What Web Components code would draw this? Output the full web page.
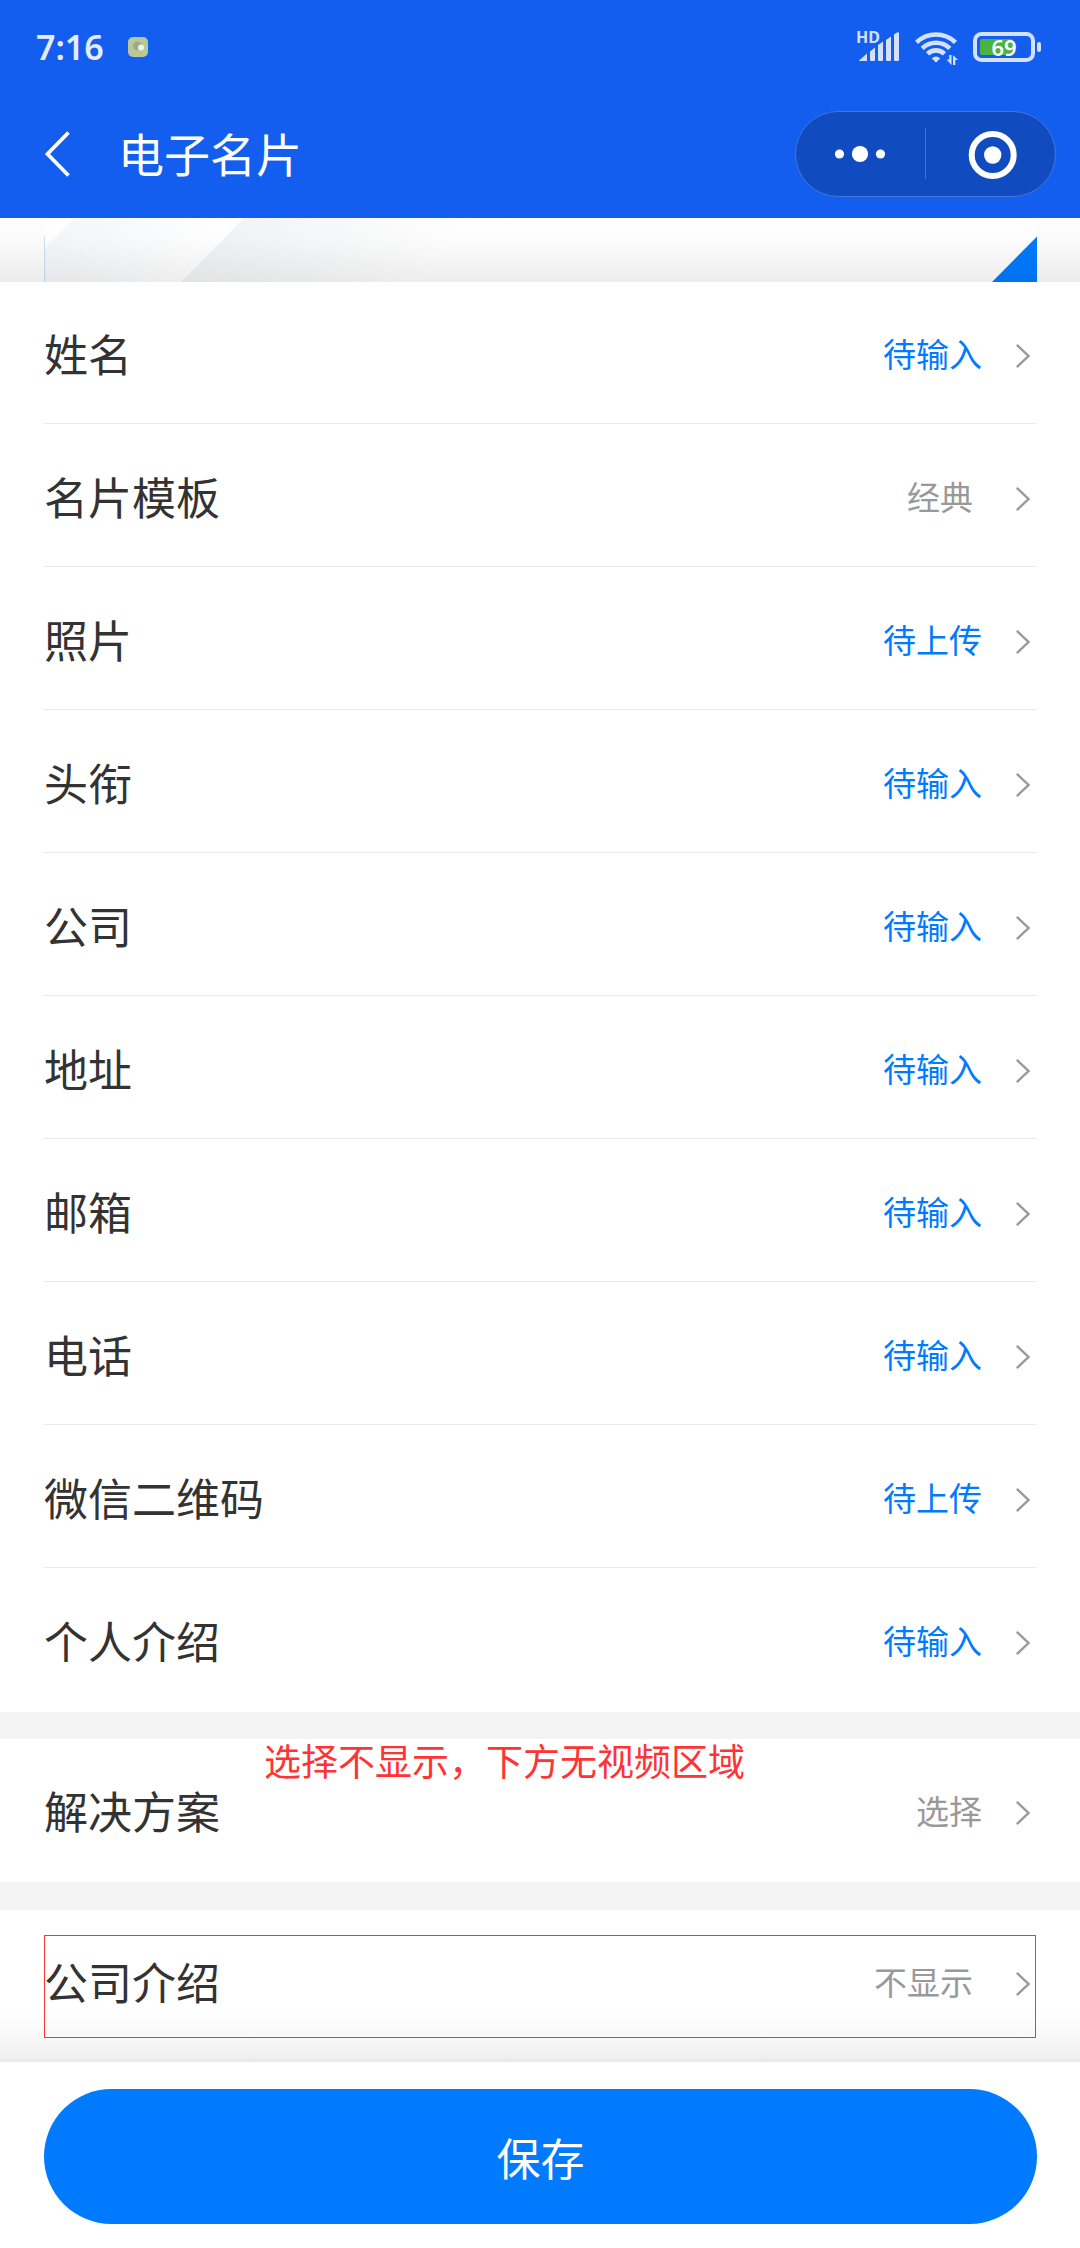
<!DOCTYPE html>
<html lang="zh-CN">
<head>
<meta charset="utf-8">
<title>电子名片</title>
<style>
  html, body {
    margin: 0;
    padding: 0;
  }

  body {
    width: 1080px;
    height: 2248px;
    overflow: hidden;
    background: #fff;
    color: #333;
    font-family: "Noto Sans CJK SC", sans-serif;
  }
</style>
</head>
<body>
<card-page></card-page>

<script>
class StatusBar extends HTMLElement {
  constructor() {
    super()
    this.attachShadow({ mode: 'open' })
  }

  connectedCallback() {
    this.shadowRoot.innerHTML = `
      <style>
        :host {
          height: 94px;
          padding: 0 39px 0 36px;
          display: flex;
          align-items: center;
          box-sizing: border-box;
          color: #e4ecff;
          font-family: "Noto Sans", sans-serif;
        }

        svg {
          display: block;
        }

        .time {
          width: 92px;
          padding-bottom: 1px;
          font-size: 34px;
          font-weight: 600;
          line-height: 40px;
        }

        .icons {
          margin-left: auto;
          padding-top: 4px;
          display: flex;
          align-items: flex-start;
        }

        .signal, .battery {
          position: relative;
        }

        .wifi {
          margin: 0 15px 0 16px;
        }

        .hd {
          position: absolute;
          left: -3px;
          top: -3px;
          font-size: 16px;
          font-weight: 700;
          line-height: 16px;
          color: #d3e0ff;
        }

        .level {
          position: absolute;
          left: 0;
          top: 0;
          width: 62px;
          text-align: center;
          font-size: 22px;
          font-weight: 600;
          line-height: 30px;
          color: #fff;
        }
      </style>

      <span class="time">7:16</span>
      <svg width="20" height="20" viewBox="0 0 20 20">
        <rect width="20" height="20" rx="5" fill="#b8c898"/>
        <circle cx="9.5" cy="9" r="4.6" fill="#9dab88"/>
        <circle cx="13" cy="10.6" r="3" fill="#f0f3e8"/>
      </svg>
      <div class="icons">
        <div class="signal">
          <svg width="40" height="34" viewBox="0 0 40 34" fill="#d3e0ff">
            <path d="M0 28.500L8 21.500V29H1Q0 29 0 28.500Z"/>
            <path d="M11 19.500L16 15.500V28Q16 29 15 29H12Q11 29 11 28Z"/>
            <path d="M19 13L24 9.500V28Q24 29 23 29H20Q19 29 19 28Z"/>
            <path d="M27 8L32 4.500V28Q32 29 31 29H28Q27 29 27 28Z"/>
            <path d="M35 2.500L38.500 .2Q40 0 40 1V28Q40 29 39 29H36Q35 29 35 28Z"/>
          </svg>
          <span class="hd">HD</span>
        </div>
        <svg class="wifi" width="43" height="34" viewBox="0 0 43 34">
          <g fill="none" stroke="#d3e0ff" stroke-width="4.600">
            <path d="M1.500 10.400A28 28 0 0 1 40.500 10.400"/>
            <path d="M7.200 16.300A20 20 0 0 1 34.800 16.300"/>
            <path d="M12.600 21.800A12 12 0 0 1 29.400 21.800"/>
          </g>
          <path d="M21 30.500L16.800 26.400Q21 22.500 25.200 26.400Z" fill="#d3e0ff"/>
          <path d="M36.500 23V33L31.500 27.500H34.200V23ZM38 33V23L43 28H40.300V33Z" fill="#d3e0ff"/>
        </svg>
        <div class="battery">
          <svg width="68" height="30" viewBox="0 0 68 30">
            <rect x="2" y="2" width="58" height="26" rx="6.500" fill="none" stroke="#d3e0ff" stroke-width="4"/>
            <rect x="7" y="7" width="33" height="16" rx="2" fill="#4bb13f"/>
            <rect x="64" y="10" width="4" height="10" rx="2" fill="#d3e0ff"/>
          </svg>
          <span class="level">69</span>
        </div>
      </div>
    `
  }
}

class NavBar extends HTMLElement {
  constructor() {
    super()
    this.attachShadow({ mode: 'open' })
  }

  connectedCallback() {
    this.shadowRoot.innerHTML = `
      <style>
        :host {
          height: 124px;
          padding: 0 24px 4px 44px;
          display: flex;
          align-items: center;
          box-sizing: border-box;
          color: #fff;
        }

        svg {
          display: block;
        }

        .title {
          margin-left: 46px;
          padding-bottom: 4px;
          font-size: 46px;
          line-height: 60px;
        }

        .capsule {
          width: 261px;
          height: 86px;
          margin-left: auto;
          border: 1px solid #4375dd;
          border-radius: 43px;
          box-sizing: border-box;
          background: #114bc0;
          display: flex;
          align-items: center;
          justify-content: center;
        }
      </style>

      <svg width="28" height="48" viewBox="0 0 28 48">
        <path d="M24.500 2.500L3.500 24L24.500 45.500" fill="none" stroke="#fff" stroke-width="3.800"/>
      </svg>
      <span class="title"><slot></slot></span>
      <div class="capsule">
        <svg width="259" height="84" viewBox="0 0 259 84">
          <g fill="#fff">
            <circle cx="43.500" cy="42" r="4.600"/>
            <circle cx="64" cy="42" r="8.100"/>
            <circle cx="84.500" cy="42" r="4.600"/>
            <circle cx="196.700" cy="43" r="8.700"/>
          </g>
          <path d="M129.500 16V67" stroke="#4375dd"/>
          <circle cx="196.700" cy="43" r="21" fill="none" stroke="#fff" stroke-width="6"/>
        </svg>
      </div>
    `
  }
}

// Bottom edge of the business card, cut off by the form below it
class CardPreview extends HTMLElement {
  constructor() {
    super()
    this.attachShadow({ mode: 'open' })
  }

  connectedCallback() {
    this.shadowRoot.innerHTML = `
      <style>
        :host {
          display: block;
          height: 64px;
          background: #fdfdfd;
        }

        svg {
          display: block;
        }
      </style>

      <svg width="1080" height="64" viewBox="0 0 1080 64">
        <defs>
          <linearGradient id="band" gradientUnits="userSpaceOnUse" x1="50" y1="20" x2="150" y2="100">
            <stop offset="0" stop-color="#f4f6f9"/>
            <stop offset="1" stop-color="#fff"/>
          </linearGradient>
          <linearGradient id="fold" gradientUnits="userSpaceOnUse" x1="210" y1="30" x2="350" y2="150">
            <stop offset="0" stop-color="#f2f3f5"/>
            <stop offset="1" stop-color="#fff"/>
          </linearGradient>
          <linearGradient id="shade" x1="0" y1="0" x2="0" y2="1">
            <stop offset="0" stop-color="#000" stop-opacity="0"/>
            <stop offset=".35" stop-color="#000" stop-opacity=".01"/>
            <stop offset="1" stop-color="#000" stop-opacity=".07"/>
          </linearGradient>
        </defs>
        <rect x="44" width="993" height="64" fill="#fff"/>
        <path d="M75 0H244L181 64H44V31Z" fill="url(#band)"/>
        <path d="M244 0H1037V64H181Z" fill="url(#fold)"/>
        <path d="M44.500 18V64" stroke="#c9def8"/>
        <path d="M1037 18.500V64H992Z" fill="#007aff"/>
        <rect width="1080" height="64" fill="url(#shade)"/>
      </svg>
    `
  }
}

class FormCell extends HTMLElement {
  constructor() {
    super()
    this.attachShadow({ mode: 'open' })
  }

  connectedCallback() {
    this.shadowRoot.innerHTML = `
      <style>
        :host {
          height: 143px;
          margin: 0 44px;
          padding-right: 6px;
          display: flex;
          align-items: center;
          box-sizing: border-box;
          border-bottom: 1px solid #e9e9ec;
          font-size: 44px;
        }

        :host([plain]) {
          border-bottom-color: transparent;
        }

        .value {
          margin-left: auto;
          margin-right: 34px;
          font-size: 33px;
          color: #999;
        }

        :host([pending]) .value {
          color: #007aff;
        }

        :host([picked]) .value {
          margin-right: 43px;
        }

        svg {
          display: block;
          margin-top: 5px;
        }
      </style>

      <span>${this.getAttribute('label')}</span>
      <span class="value"><slot></slot></span>
      <svg width="14" height="24" viewBox="0 0 14 24">
        <path d="M.8 .8L12.500 12L.8 23.200" fill="none" stroke="#999" stroke-width="2.300"/>
      </svg>
    `
  }
}

class FormGroup extends HTMLElement {
  constructor() {
    super()
    this.attachShadow({ mode: 'open' })
  }

  connectedCallback() {
    this.shadowRoot.innerHTML = `
      <style>
        :host {
          display: flex;
          flex-direction: column;
          position: relative;
          background: #fff;
        }
      </style>
      <slot></slot>
    `
  }
}

class SaveBar extends HTMLElement {
  constructor() {
    super()
    this.attachShadow({ mode: 'open' })
  }

  connectedCallback() {
    this.shadowRoot.innerHTML = `
      <style>
        :host {
          display: block;
          height: 186px;
          padding: 27px 43px 0 44px;
          box-sizing: border-box;
          position: relative;
          background: #fff;
        }

        /* soft shadow over the form above the bar */
        :host::before {
          content: "";
          position: absolute;
          left: 0;
          right: 0;
          bottom: 100%;
          height: 50px;
          background: linear-gradient(
            rgba(0, 0, 0, 0),
            rgba(0, 0, 0, 0.022) 45%,
            rgba(0, 0, 0, 0.063) 47px,
            rgba(0, 0, 0, 0.082) 47px
          );
        }

        button {
          display: block;
          width: 100%;
          height: 135px;
          padding: 0;
          border: 0;
          border-radius: 67.5px;
          background: #007aff;
          color: #fff;
          font: inherit;
          font-size: 44px;
        }
      </style>
      <button><slot></slot></button>
    `
  }
}

class CardPage extends HTMLElement {
  constructor() {
    super()
    this.attachShadow({ mode: 'open' })
  }

  connectedCallback() {
    this.shadowRoot.innerHTML = `
      <style>
        :host {
          width: 1080px;
          height: 2248px;
          display: flex;
          flex-direction: column;
          background: #f4f4f4;
        }

        header {
          height: 218px;
          background: #145eef;
        }

        .profile {
          height: 1430px;
        }

        .profile form-cell {
          padding-top: 2px;
        }

        .profile form-cell:first-child {
          height: 142px;
          padding-top: 1px;
        }

        .solution {
          margin-top: 27px;
        }

        .company {
          margin-top: 28px;
          height: 152px;
        }

        .note {
          position: absolute;
          left: 264px;
          top: -5px;
          font-size: 37px;
          line-height: 52px;
          white-space: nowrap;
          color: #ff3333;
        }

        .frame {
          position: absolute;
          left: 44px;
          top: 25px;
          width: 992px;
          height: 103px;
          box-sizing: border-box;
          border: 1px solid #f33;
          z-index: 1;
        }
      </style>

      <header>
        <status-bar></status-bar>
        <nav-bar>电子名片</nav-bar>
      </header>
      <card-preview></card-preview>
      <form-group class="profile">
        <form-cell label="姓名" pending>待输入</form-cell>
        <form-cell label="名片模板" picked>经典</form-cell>
        <form-cell label="照片" pending>待上传</form-cell>
        <form-cell label="头衔" pending>待输入</form-cell>
        <form-cell label="公司" pending>待输入</form-cell>
        <form-cell label="地址" pending>待输入</form-cell>
        <form-cell label="邮箱" pending>待输入</form-cell>
        <form-cell label="电话" pending>待输入</form-cell>
        <form-cell label="微信二维码" pending>待上传</form-cell>
        <form-cell label="个人介绍" pending plain>待输入</form-cell>
      </form-group>
      <form-group class="solution">
        <form-cell label="解决方案" plain>选择</form-cell>
        <span class="note">选择不显示，下方无视频区域</span>
      </form-group>
      <form-group class="company">
        <form-cell label="公司介绍" picked plain>不显示</form-cell>
        <div class="frame"></div>
      </form-group>
      <save-bar>保存</save-bar>
    `
  }
}

customElements.define('status-bar', StatusBar)
customElements.define('nav-bar', NavBar)
customElements.define('card-preview', CardPreview)
customElements.define('form-cell', FormCell)
customElements.define('form-group', FormGroup)
customElements.define('save-bar', SaveBar)
customElements.define('card-page', CardPage)
</script>
</body>
</html>
